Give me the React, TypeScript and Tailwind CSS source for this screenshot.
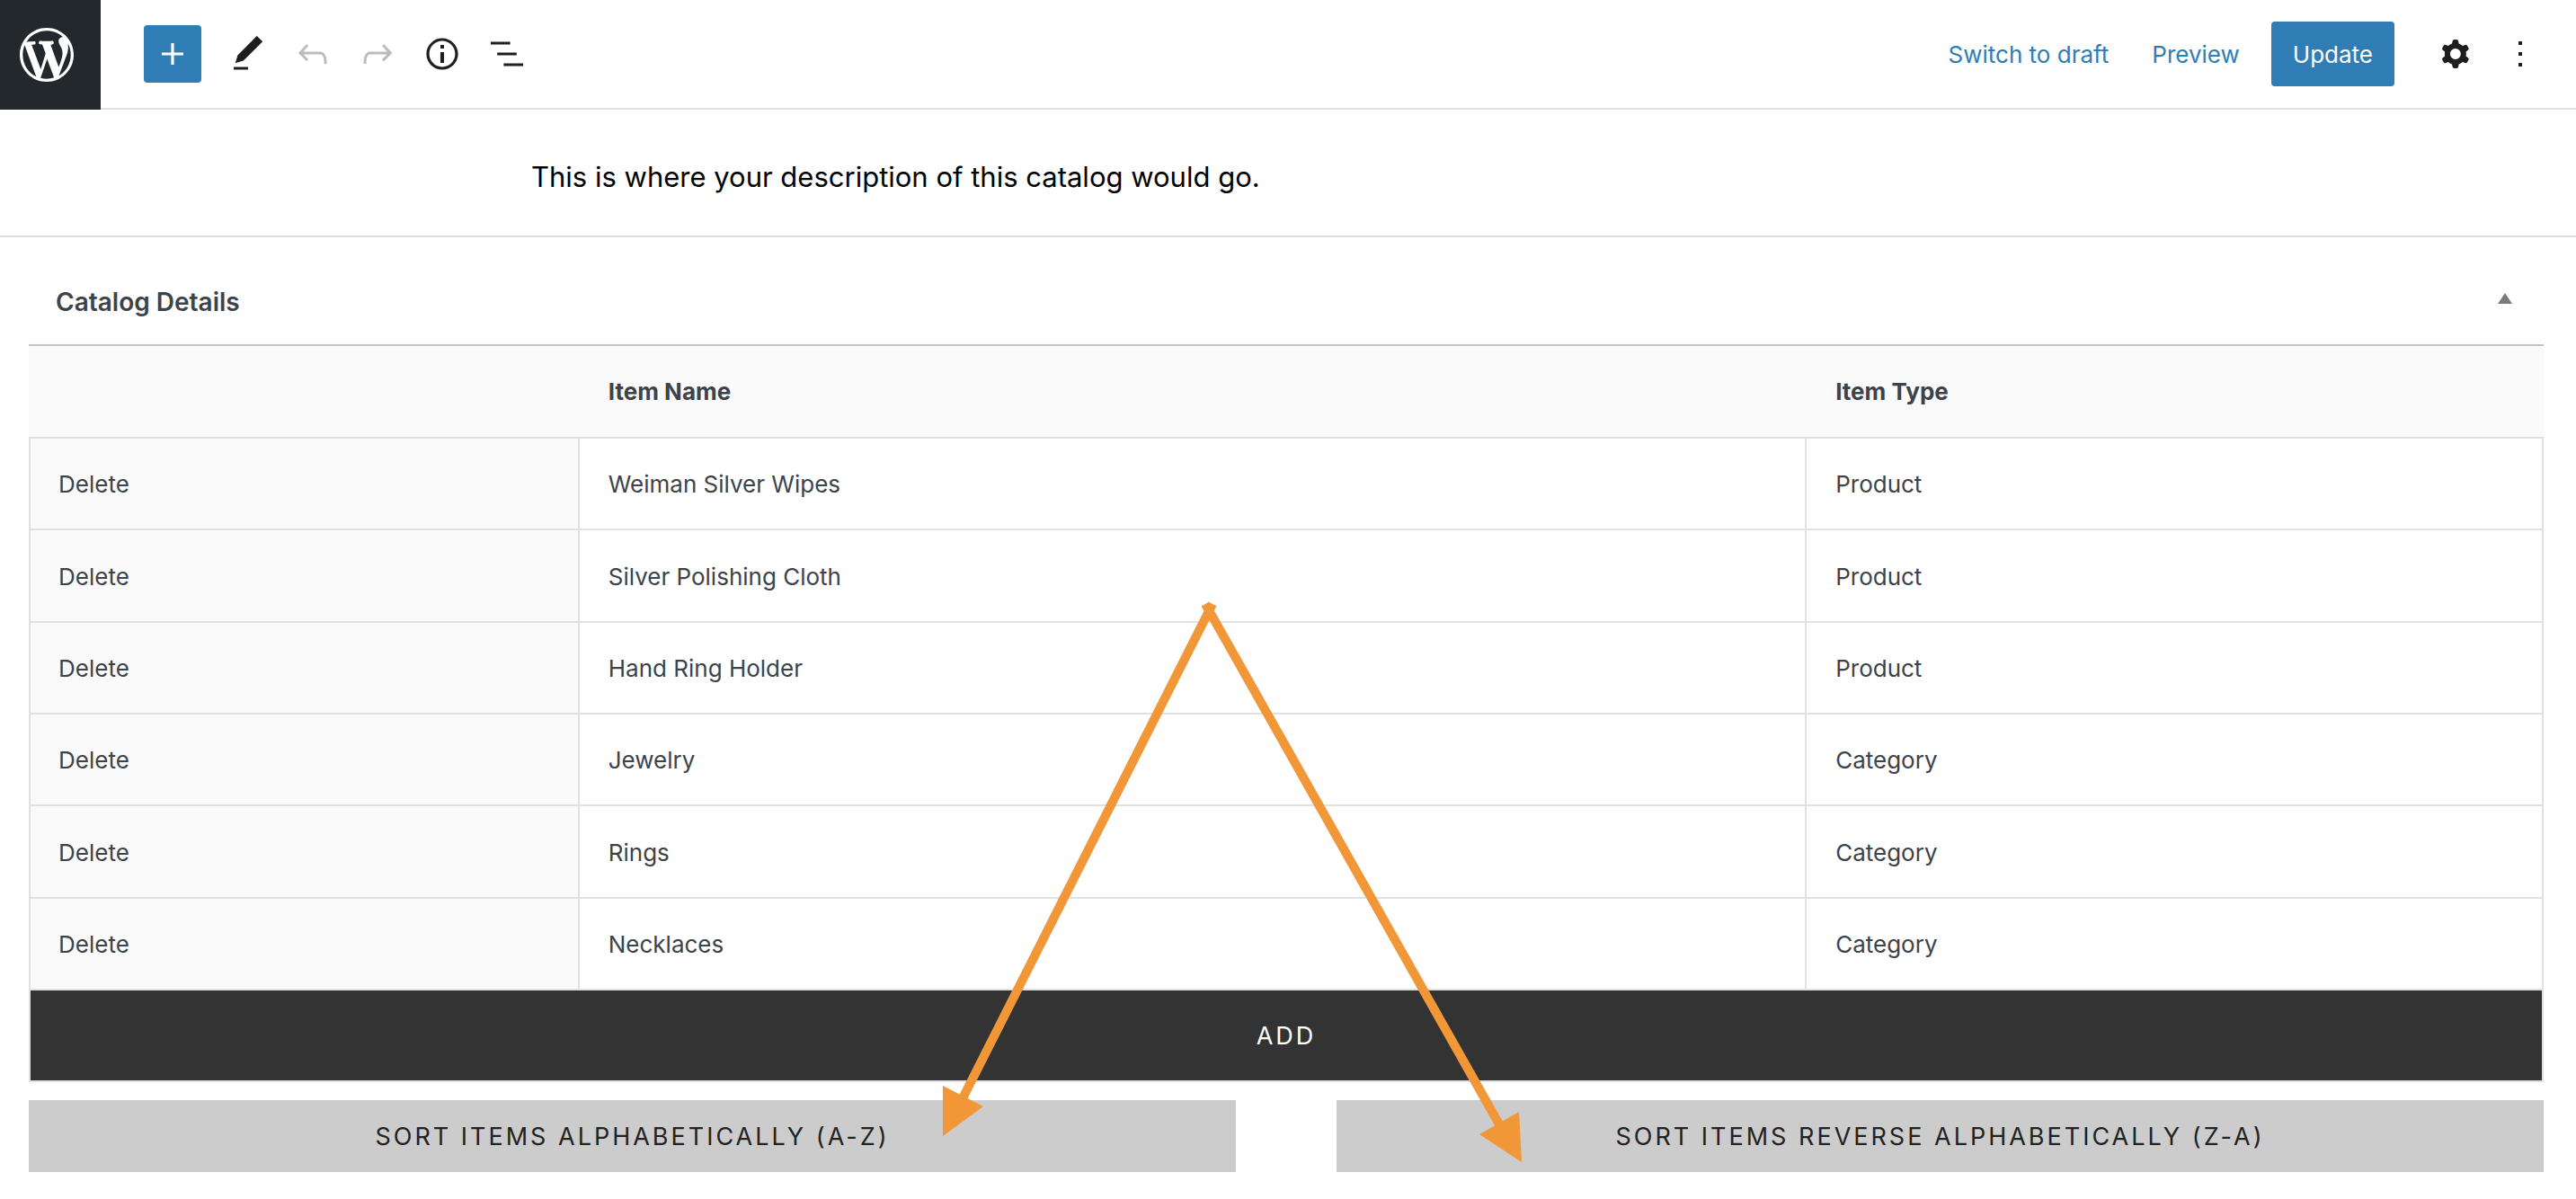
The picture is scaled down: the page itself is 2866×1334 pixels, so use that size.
import React from "react";

const WORDPRESS =
  "M20 10c0-5.51-4.49-10-10-10C4.48 0 0 4.49 0 10c0 5.52 4.48 10 10 10 5.51 0 10-4.48 10-10zM7.78 15.37L4.37 6.22c.55-.02 1.17-.08 1.17-.08.5-.06.44-1.13-.06-1.11 0 0-1.45.11-2.37.11-.18 0-.37 0-.58-.01C4.12 2.69 6.87 1.11 10 1.11c2.33 0 4.45.87 6.05 2.34-.68-.11-1.65.39-1.65 1.58 0 .74.45 1.36.9 2.1.35.61.55 1.36.55 2.46 0 1.49-1.4 5-1.4 5l-3.03-8.37c.54-.02.82-.17.82-.17.5-.05.44-1.25-.06-1.22 0 0-1.44.12-2.38.12-.87 0-2.33-.12-2.33-.12-.5-.03-.56 1.2-.06 1.22l.92.08 1.26 3.41zM17.41 10c.24-.64.74-1.87.43-4.25.7 1.29 1.05 2.71 1.05 4.25 0 3.29-1.73 6.24-4.4 7.78.97-2.59 1.94-5.2 2.92-7.78zM6.1 18.09C3.12 16.65 1.11 13.53 1.11 10c0-1.3.23-2.48.72-3.59C3.25 10.3 4.67 14.2 6.1 18.09zm4.03-6.63l2.58 6.98c-.86.29-1.76.45-2.71.45-.79 0-1.57-.11-2.29-.33.81-2.38 1.62-4.74 2.42-7.1z";
const PLUS = "M18 11.2h-5.2V6h-1.6v5.2H6v1.6h5.2V18h1.6v-5.2H18z";
const COG =
  "M10.289 4.836A1 1 0 0111.275 4h1.306a1 1 0 01.987.836l.244 1.466c.787.26 1.503.679 2.108 1.218l1.393-.522a1 1 0 011.216.437l.653 1.13a1 1 0 01-.23 1.273l-1.148.944a6.025 6.025 0 010 2.435l1.149.946a1 1 0 01.23 1.272l-.653 1.13a1 1 0 01-1.216.437l-1.394-.522c-.605.54-1.32.958-2.108 1.218l-.244 1.466a1 1 0 01-.987.836h-1.306a1 1 0 01-.986-.836l-.244-1.466a5.995 5.995 0 01-2.108-1.218l-1.394.522a1 1 0 01-1.217-.436l-.653-1.131a1 1 0 01.23-1.272l1.149-.946a6.026 6.026 0 010-2.435l-1.148-.944a1 1 0 01-.23-1.272l.653-1.131a1 1 0 011.217-.437l1.393.522a5.994 5.994 0 012.108-1.218l.244-1.466zM14.929 12a3 3 0 11-6 0 3 3 0 016 0z";
const MORE = "M13 19h-2v-2h2v2zm0-6h-2v-2h2v2zm0-6h-2V5h2v2z";

const tools = [
  {
    label: "Tools",
    disabled: false,
    d: "M20.1 5.1L16.9 2 6.2 12.7l-1.3 4.4 4.5-1.3L20.1 5.1zM4 20.8h8v-1.5H4v1.5z",
  },
  {
    label: "Undo",
    disabled: true,
    d: "M18.3 11.7c-.6-.6-1.4-.9-2.3-.9H6.7l2.9-3.3-1.1-1-4.5 5L8.5 16l1-1-2.7-2.7H16c.5 0 .9.2 1.3.5 1 1 1 3.4 1 4.5v.3h1.5v-.2c0-1.5 0-4.3-1.5-5.7z",
  },
  {
    label: "Redo",
    disabled: true,
    d: "M15.6 6.5l-1.1 1 2.9 3.3H8c-.9 0-1.7.3-2.3.9-1.4 1.5-1.4 4.2-1.4 5.6v.2h1.5v-.3c0-1.1 0-3.5 1-4.5.3-.3.7-.5 1.3-.5h9.2L14.5 15l1.1 1.1 4.6-4.6-4.6-5z",
  },
  {
    label: "Details",
    disabled: false,
    d: "M12 3.2c-4.8 0-8.8 3.9-8.8 8.8 0 4.8 3.9 8.8 8.8 8.8 4.8 0 8.8-3.9 8.8-8.8 0-4.8-4-8.8-8.8-8.8zm0 16c-4 0-7.2-3.3-7.2-7.2C4.8 8 8 4.8 12 4.8s7.2 3.3 7.2 7.2c0 4-3.2 7.2-7.2 7.2zM11 17h2v-6h-2v6zm0-8h2V7h-2v2z",
  },
  {
    label: "List View",
    disabled: false,
    d: "M13.8 5.2H3v1.5h10.8V5.2zm-3.6 12v1.5H21v-1.5H10.2zm7.2-6H6.6v1.5h10.8v-1.5z",
  },
];

const items = [
  ["Weiman Silver Wipes", "Product"],
  ["Silver Polishing Cloth", "Product"],
  ["Hand Ring Holder", "Product"],
  ["Jewelry", "Category"],
  ["Rings", "Category"],
  ["Necklaces", "Category"],
];

function Icon({ d }: { d: string }) {
  return (
    <svg viewBox="0 0 24 24" className="size-12 fill-current" aria-hidden="true">
      <path fillRule="evenodd" d={d} />
    </svg>
  );
}

function Header() {
  return (
    <header className="flex h-[122px] items-stretch">
      <a
        href="#posts"
        aria-label="View Posts"
        className="flex w-28 items-center justify-center bg-[#23282d] pr-2 text-white"
      >
        <svg viewBox="-2 -2 24 24" className="size-[72px] fill-current" aria-hidden="true">
          <path d={WORDPRESS} />
        </svg>
      </a>
      <div className="flex flex-1 items-center justify-between border-b-2 border-[#e0e0e0] pr-[26px] pl-12">
        <div className="flex items-center">
          <button
            aria-label="Add block"
            className="mr-4 flex size-16 items-center justify-center rounded-sm bg-[#307cb5] text-white"
          >
            <Icon d={PLUS} />
          </button>
          {tools.map((tool) => (
            <button
              key={tool.label}
              aria-label={tool.label}
              disabled={tool.disabled}
              className="flex size-[72px] items-center justify-center text-[#1e1e1e] disabled:text-[#bcbcbc]"
            >
              <Icon d={tool.d} />
            </button>
          ))}
        </div>
        <div className="flex items-center text-[26px] leading-9 text-[#307cb5]">
          <button className="px-6 pt-0.5">Switch to draft</button>
          <button className="mr-[11px] px-6 pt-0.5">Preview</button>
          <button className="mr-8 h-[72px] rounded-sm bg-[#307cb5] px-6 pt-0.5 text-white">
            Update
          </button>
          <button
            aria-label="Settings"
            className="flex size-[72px] items-center justify-center text-[#1e1e1e]"
          >
            <Icon d={COG} />
          </button>
          <button
            aria-label="Options"
            className="flex size-[72px] items-center justify-center text-[#1e1e1e]"
          >
            <Icon d={MORE} />
          </button>
        </div>
      </div>
    </header>
  );
}

function CatalogTable() {
  return (
    <table className="w-full table-fixed border-separate border-spacing-0 text-left">
      <colgroup>
        <col className="w-[21.9%]" />
        <col className="w-[48.8%]" />
        <col />
      </colgroup>
      <thead>
        <tr className="h-[103px] bg-[#fafafa]">
          <td className="border-b-2 border-[#e1e1e1]" />
          <th scope="col" className="border-b-2 border-[#e1e1e1] px-8 font-bold">
            Item Name
          </th>
          <th scope="col" className="border-b-2 border-[#e1e1e1] px-8 font-bold">
            Item Type
          </th>
        </tr>
      </thead>
      <tbody>
        {items.map(([name, type]) => (
          <tr key={name} className="h-[102px] nth-[3n+2]:h-[103px]">
            <td className="border-x-2 border-b-2 border-[#e1e1e1] bg-[#fafafa] px-[31px] pt-0.5">
              <button>Delete</button>
            </td>
            <td className="border-r-2 border-b-2 border-[#e1e1e1] px-8 pt-0.5">{name}</td>
            <td className="border-r-2 border-b-2 border-[#e1e1e1] px-8 pt-0.5">{type}</td>
          </tr>
        ))}
        <tr>
          <td colSpan={3} className="border-x-2 border-b-2 border-[#e1e1e1] p-0">
            <button className="block h-[100px] w-full bg-[#333333] pt-0.5 text-center text-[27px] tracking-[3px] text-white">
              ADD
            </button>
          </td>
        </tr>
      </tbody>
    </table>
  );
}

function Arrows() {
  return (
    <svg
      viewBox="0 0 2866 1334"
      className="pointer-events-none absolute top-0 left-0 w-full"
      aria-hidden="true"
    >
      <g stroke="#f19737" strokeWidth="10" fill="none">
        <path d="M1349 672L1068 1228" />
        <path d="M1341 672L1672 1258" />
      </g>
      <path
        fill="#f19737"
        d="M1049 1208L1094 1231L1049 1264ZM1690 1237L1646 1262L1693 1293Z"
      />
    </svg>
  );
}

export default function App() {
  return (
    <div className="relative min-h-screen bg-white font-[Inter,'Liberation_Sans',sans-serif]">
      <Header />
      <main>
        <div className="border-b-2 border-[#dddddd] pt-[52px] pb-[42px] pl-[591px]">
          <p className="text-[31px] leading-[46px] text-black">
            This is where your description of this catalog would go.
          </p>
        </div>
        <section className="mx-8 mr-9 mt-6 text-[26px] leading-9 text-[#3c434a] shadow-[0_2px_2px_rgba(0,0,0,0.04)]">
          <div className="flex h-[97px] items-center justify-between border-b-2 border-[#c3c4c7] pr-[35px] pl-[30px]">
            <h2 className="text-[28px] font-semibold">Catalog Details</h2>
            <button aria-label="Toggle panel: Catalog Details" className="pb-2">
              <svg viewBox="0 0 16 12" className="h-3 w-4 fill-[#787c82]" aria-hidden="true">
                <path d="M8 0L16 12H0Z" />
              </svg>
            </button>
          </div>
          <CatalogTable />
          <div className="flex justify-between pt-5 pb-[30px] text-[27px] text-[#222222]">
            <button className="h-20 w-[48%] bg-[#cccccc] pt-0.5 tracking-[3px]">
              SORT ITEMS ALPHABETICALLY (A-Z)
            </button>
            <button className="h-20 w-[48%] bg-[#cccccc] pt-0.5 tracking-[3px]">
              SORT ITEMS REVERSE ALPHABETICALLY (Z-A)
            </button>
          </div>
        </section>
      </main>
      <Arrows />
    </div>
  );
}
